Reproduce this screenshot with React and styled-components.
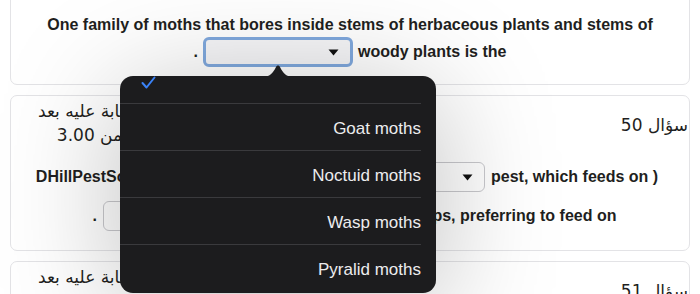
import React from "react";
import styled, { createGlobalStyle } from "styled-components";

const GlobalStyle = createGlobalStyle`
  html, body { margin: 0; padding: 0; background: #ffffff; }
  body {
    font-family: "Liberation Sans", Arial, "DejaVu Sans", sans-serif;
    color: #1d1d1f;
    overflow: hidden;
  }
`;

const Screen = styled.div`
  position: relative;
  width: 700px;
  height: 294px;
  overflow: hidden;
`;

const List = styled.div`
  display: flex;
  flex-direction: column;
  gap: 10px;
  padding: 0 10px;
  margin-top: -10px;
`;

const Card = styled.div`
  background: #ffffff;
  border: 1px solid #e3e3e6;
  border-radius: 7px;
  padding: ${(p) => p.$pad || "3px 18px 19px 20px"};
`;

const Centered = styled.div`
  display: flex;
  flex-direction: column;
  align-items: center;
`;

const Line = styled.div`
  display: flex;
  align-items: center;
  justify-content: center;
  gap: ${(p) => p.$gap || "6px"};
  height: ${(p) => p.$h || "30px"};
  margin-top: ${(p) => p.$mt || "0"};
  padding-left: ${(p) => p.$pl || "0"};
  padding-right: ${(p) => p.$pr || "0"};
  font-size: 16px;
  font-weight: 700;
  color: #1f1f21;
  white-space: nowrap;
`;

const Select = styled.div`
  box-sizing: border-box;
  width: ${(p) => p.$w || "150px"};
  height: 30px;
  flex: none;
  border-radius: 6px;
  display: flex;
  align-items: center;
  justify-content: flex-end;
  padding-right: 11px;
  background: ${(p) => (p.$focus ? "#f6f6f8" : "#ffffff")};
  border: ${(p) => (p.$focus ? "3px solid #80a9de" : "1px solid #c9c9cd")};
`;

const TopRow = styled.div`
  display: flex;
  justify-content: space-between;
  align-items: flex-start;
`;

const Info = styled.div`
  direction: rtl;
  text-align: center;
  font-family: "DejaVu Sans", sans-serif;
  font-size: 17px;
  line-height: 24px;
  color: #1f1f21;
  margin-left: 7px;
`;

const QNo = styled.div`
  direction: rtl;
  font-family: "DejaVu Sans", sans-serif;
  font-size: 17px;
  line-height: 24px;
  margin-top: 14px;
  margin-right: -17px;
  color: #1f1f21;
`;

const Question = styled.div`
  display: flex;
  flex-direction: column;
  gap: 9px;
  margin-top: 15px;
`;

const Popover = styled.div`
  position: absolute;
  left: 120px;
  top: 76px;
  width: 316px;
  height: 217px;
  background: #1c1c1e;
  border-radius: 13px;
  box-shadow: 0 16px 120px rgba(0, 0, 0, 0.26);
`;

const Arrow = styled.svg`
  position: absolute;
  left: 142px;
  top: -12px;
  display: block;
`;

const Clip = styled.div`
  height: 100%;
  overflow: hidden;
  border-radius: 13px;
`;

const Options = styled.div`
  margin-top: -20px;
`;

const Option = styled.div`
  height: 47px;
  box-sizing: border-box;
  display: flex;
  align-items: center;
  justify-content: space-between;
  padding: 3px 0 0 21px;
  margin-right: 15px;
  font-size: 17px;
  color: #ececee;
  border-top: ${(p) => (p.$first ? "none" : "1px solid #3a3a3d")};
`;

const CheckWrap = styled.span`
  display: flex;
  margin-top: 2px;
`;

const Caret = () => (
  <svg width="11" height="7" viewBox="0 0 11 7">
    <path d="M0.5 0.5 H10.5 L5.5 6.5 Z" fill="#111" />
  </svg>
);

const Check = () => (
  <CheckWrap>
    <svg width="15" height="13" viewBox="0 0 15 13">
      <path
        d="M1.5 7 L5.5 11.5 L13.5 1.5"
        fill="none"
        stroke="#3a82f7"
        strokeWidth="2"
        strokeLinecap="round"
        strokeLinejoin="round"
      />
    </svg>
  </CheckWrap>
);

export default function App() {
  return (
    <Screen>
      <GlobalStyle />
      <List>
        <Card $pad="23px 20px 17px 20px">
          <Centered>
            <Line $h="22px">
              One family of moths that bores inside stems of herbaceous plants and stems of
            </Line>
            <Line $mt="1px" $gap="5px">
              <span>.</span>
              <Select $focus>
                <Caret />
              </Select>
              <span>woody plants is the</span>
            </Line>
          </Centered>
        </Card>

        <Card>
          <TopRow>
            <Info>
              <div>لم تتم الإجابة عليه بعد</div>
              <div>الدرجة من 3.00</div>
            </Info>
            <QNo>سؤال 50</QNo>
          </TopRow>
          <Question>
            <Line $pr="8px">
              <span>DHillPestSolutions is a common garden</span>
              <Select $w="140px">
                <Caret />
              </Select>
              <span>pest, which feeds on )</span>
            </Line>
            <Line $pl="7px">
              <span>.</span>
              <Select $w="142px">
                <Caret />
              </Select>
              <span>leaves of many field crops, preferring to feed on</span>
            </Line>
          </Question>
        </Card>

        <Card $pad="3px 18px 40px 20px">
          <TopRow>
            <Info>
              <div>لم تتم الإجابة عليه بعد</div>
              <div>الدرجة من 3.00</div>
            </Info>
            <QNo>سؤال 51</QNo>
          </TopRow>
        </Card>
      </List>

      <Popover>
        <Arrow width="32" height="13" viewBox="0 0 32 13">
          <path d="M0 13 C8 13 11 9 14 3 C15 1 17 1 18 3 C21 9 24 13 32 13 Z" fill="#1c1c1e" />
        </Arrow>
        <Clip>
          <Options>
            <Option $first>
              <Check />
              <span />
            </Option>
            <Option>
              <span />
              <span>Goat moths</span>
            </Option>
            <Option>
              <span />
              <span>Noctuid moths</span>
            </Option>
            <Option>
              <span />
              <span>Wasp moths</span>
            </Option>
            <Option>
              <span />
              <span>Pyralid moths</span>
            </Option>
          </Options>
        </Clip>
      </Popover>
    </Screen>
  );
}
